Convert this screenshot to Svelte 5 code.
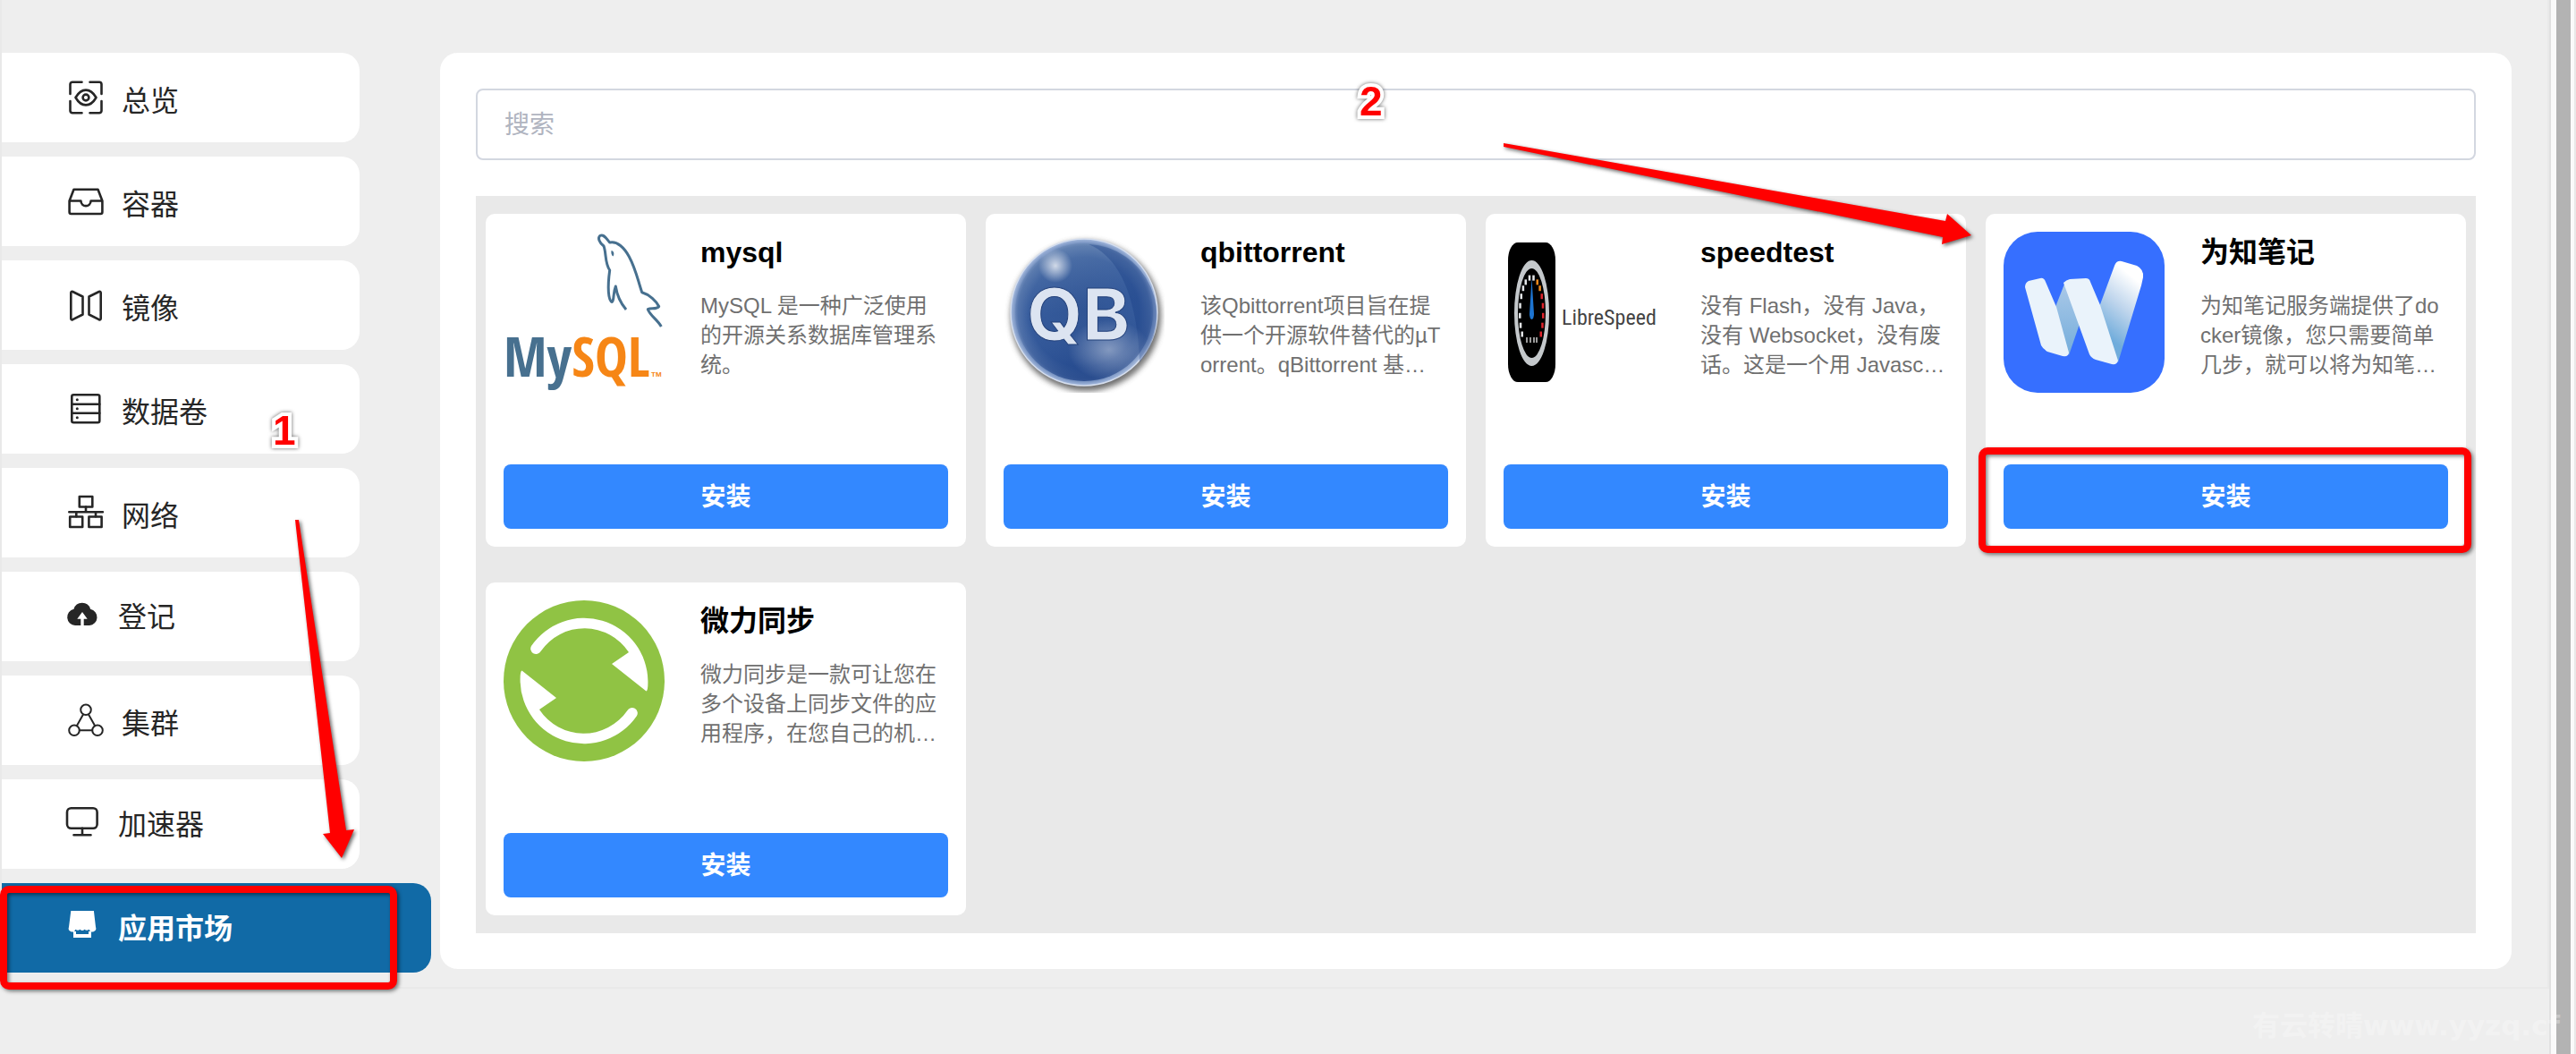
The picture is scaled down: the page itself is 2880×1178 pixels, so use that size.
<script>
	const menus = [
		{ icon: 'overview', label: '总览' },
		{ icon: 'container', label: '容器' },
		{ icon: 'image', label: '镜像' },
		{ icon: 'volume', label: '数据卷' },
		{ icon: 'network', label: '网络' },
		{ icon: 'registry', label: '登记', small: true },
		{ icon: 'cluster', label: '集群' },
		{ icon: 'mirror', label: '加速器', small: true },
		{ icon: 'market', label: '应用市场', small: true }
	];

	const apps = [
		{ logo: 'mysql', name: 'mysql', desc: 'MySQL 是一种广泛使用的开源关系数据库管理系统。' },
		{ logo: 'qb', name: 'qbittorrent', desc: '该Qbittorrent项目旨在提供一个开源软件替代的µTorrent。qBittorrent 基…' },
		{ logo: 'speed', name: 'speedtest', desc: '没有 Flash，没有 Java，没有 Websocket，没有废话。这是一个用 Javasc…' },
		{ logo: 'wiz', name: '为知笔记', desc: '为知笔记服务端提供了docker镜像，您只需要简单几步，就可以将为知笔…', marked: true },
		{ logo: 'weili', name: '微力同步', desc: '微力同步是一款可让您在多个设备上同步文件的应用程序，在您自己的机…' }
	];

	let active = $state('market');
	let keyword = $state('');

	let shown = $derived(apps.filter((a) => a.name.includes(keyword.trim())));

	// 仪表盘刻度
	const ticks = [-126, -110, -94, -78, -62, -46, -30, -10, 10, 30, 46, 62, 78, 94, 110, 126].map((deg, i) => {
		const rad = (deg * Math.PI) / 180;
		return {
			x: 31 + 13 * Math.sin(rad),
			y: 91 - 40 * Math.cos(rad),
			color: i < 9 ? '#e4e6e8' : i < 11 ? '#f08a1c' : '#e0242c'
		};
	});
</script>

<svelte:head>
	<title>应用市场</title>
</svelte:head>

{#snippet menuIcon(name)}
	{#if name === 'overview'}
		<svg class="icon" viewBox="0 0 48 48">
			<path d="M19.500 6.800H9a2.500 2.500 0 0 0-2.500 2.500V20M28.500 6.800H39a2.500 2.500 0 0 1 2.500 2.500V20M19.500 41.200H9a2.500 2.500 0 0 1-2.500-2.500V28M28.500 41.200H39a2.500 2.500 0 0 0 2.500-2.500V28" />
			<path d="M12.500 24C19 12.800 29 12.800 35.500 24C29 35.200 19 35.200 12.500 24Z" />
			<circle cx="24" cy="24" r="3.400" />
		</svg>
	{:else if name === 'container'}
		<svg class="icon" viewBox="0 0 48 48">
			<path d="M5.600 23.500L10.500 10.800h27L42.400 23.500V36a2 2 0 0 1-2 2H7.600a2 2 0 0 1-2-2ZM5.600 23.500h12.800c.6 7.500 10.600 7.500 11.200 0h12.800" />
		</svg>
	{:else if name === 'image'}
		<svg class="icon" viewBox="0 0 48 48">
			<path d="M7.300 10.500c0-1.500.8-2 2-1.500L20.500 14.500V34.500L9.300 40.200c-1.200.5-2 0-2-1.500ZM40.700 10.500c0-1.500-.8-2-2-1.500L27.500 14.500V34.500l11.200 5.700c1.200.5 2 0 2-1.500Z" />
		</svg>
	{:else if name === 'volume'}
		<svg class="icon" viewBox="0 0 48 48">
			<rect x="8.300" y="8.300" width="31" height="31" rx="2" />
			<path d="M8.300 18.700h31M8.300 28.700h31" />
			<g fill="currentColor" stroke="none">
				<circle cx="14.300" cy="13.700" r="1.500" />
				<circle cx="14.300" cy="23.700" r="1.500" />
				<circle cx="14.300" cy="33.700" r="1.500" />
			</g>
		</svg>
	{:else if name === 'network'}
		<svg class="icon" viewBox="0 0 48 48">
			<rect x="16.800" y="6" width="14.500" height="11.500" />
			<rect x="6.200" y="28.500" width="14" height="11.500" />
			<rect x="27.400" y="28.500" width="14.200" height="11.500" />
			<path d="M24 17.500v5.800M5.300 23.300h37.600M13.300 23.300v5M35 23.300v5" />
		</svg>
	{:else if name === 'registry'}
		<svg class="icon" viewBox="0 0 40 40">
			<path
				d="M10.500 14.800a9.700 9.700 0 0 1 18.600 0A9.200 9.200 0 0 1 28 33h-6.300v-7.300h4L20 18l-5.700 7.700h4V33H12A9.200 9.200 0 0 1 10.500 14.800Z"
				fill="currentColor"
				stroke="none"
			/>
		</svg>
	{:else if name === 'cluster'}
		<svg class="icon thin" viewBox="0 0 48 48">
			<circle cx="24" cy="12.300" r="5.800" />
			<circle cx="11" cy="35.300" r="5.800" />
			<circle cx="37" cy="35.300" r="5.800" />
			<path d="M21 17.500L13.800 30.200M27 17.500l7.200 12.700M16.800 35.300h14.400" />
		</svg>
	{:else if name === 'mirror'}
		<svg class="icon" viewBox="0 0 40 40">
			<rect x="3" y="5.200" width="33.600" height="22.600" rx="4.500" />
			<path d="M20 27.800v7.500M10.500 35.300h19" />
		</svg>
	{:else}
		<svg class="icon" viewBox="0 0 40 40">
			<path
				d="M7.300 4h25.600L35 22a4 4 0 0 1-7.500 2.800a4 4 0 0 1-5 0a3.600 3.600 0 0 1-5 0a4 4 0 0 1-5 0A4 4 0 0 1 5 22ZM10 27h3v3h14v-3h3v7H10Z"
				fill="currentColor"
				stroke="none"
			/>
		</svg>
	{/if}
{/snippet}

{#snippet appLogo(name)}
	{#if name === 'mysql'}
		<svg class="logo" viewBox="0 0 180 180">
			<path
				d="M137 87C131 80 127 72 125.300 61C122 69 124 76 121.300 78.500C117 77 116 62 118.700 43C113 35 115 24 112 16C107 12 105 7 107.700 4.500C112 2 115 8 118.700 12C127 10 135 18 140.300 27.700C148 42 150 54 154.700 67.700C163 70 171 78 173.700 83.500C171 87 165 85 161.300 86.700C164 94 172 98 176.300 106"
				fill="none"
				stroke="#47708f"
				stroke-width="3"
				stroke-linejoin="round"
			/>
			<path d="M120.500 21c3 .5 3.500 4 2 6.500c-2-1-2.500-4-2-6.500Z" fill="#47708f" />
			<text class="mysql-word" x="0" y="162" fill="#47708f">My<tspan fill="#f68616">SQL</tspan></text>
			<text class="mysql-tm" x="165" y="162" fill="#f68616">TM</text>
		</svg>
	{:else if name === 'qb'}
		<svg class="logo" viewBox="0 0 180 180">
			<defs>
				<radialGradient id="qb-ball" cx="50%" cy="50%" r="50%">
					<stop offset="0" stop-color="#2a4f90" />
					<stop offset="0.750" stop-color="#30579a" />
					<stop offset="0.900" stop-color="#5475ac" />
					<stop offset="1" stop-color="#a9bde0" />
				</radialGradient>
				<linearGradient id="qb-shade" x1="0.300" y1="0" x2="0.500" y2="1">
					<stop offset="0" stop-color="#6d8bb5" stop-opacity="0.600" />
					<stop offset="0.500" stop-color="#4a6ba5" stop-opacity="0.200" />
					<stop offset="1" stop-color="#163a80" stop-opacity="0.700" />
				</linearGradient>
				<radialGradient id="qb-glow">
					<stop offset="0" stop-color="#fff" stop-opacity="0.750" />
					<stop offset="1" stop-color="#fff" stop-opacity="0" />
				</radialGradient>
				<filter id="qb-blur" x="-20%" y="-20%" width="140%" height="140%">
					<feGaussianBlur stdDeviation="3" />
				</filter>
			</defs>
			<circle cx="92" cy="94" r="84" fill="#555" opacity="0.850" filter="url(#qb-blur)" />
			<circle cx="90" cy="90" r="82" fill="url(#qb-ball)" stroke="#d5deee" stroke-width="1.500" />
			<circle cx="90" cy="90" r="77" fill="url(#qb-shade)" />
			<path d="M95 14C130 28 150 75 152 146A80 80 0 0 0 95 14Z" fill="#173d85" opacity="0.350" />
			<ellipse cx="118" cy="132" rx="46" ry="34" fill="url(#qb-glow)" opacity="0.550" />
			<circle cx="58" cy="38" r="19" fill="url(#qb-glow)" />
			<text class="qb-word" x="26" y="121">QB</text>
		</svg>
	{:else if name === 'speed'}
		<svg class="logo" viewBox="0 0 180 180">
			<rect x="5" y="12" width="53" height="156" rx="11" ry="20" fill="#000" />
			<path
				fill-rule="evenodd"
				d="M12 91a19.500 59 0 1 0 39 0a19.500 59 0 1 0-39 0ZM16 91a15.500 50 0 1 1 31 0a15.500 50 0 1 1-31 0Z"
				fill="#c4c8cb"
			/>
			{#each ticks as t}
				<rect x={t.x - 1} y={t.y - 3} width="2.500" height="6" fill={t.color} />
			{/each}
			<path d="M31.500 52L34 92a2.500 6 0 0 1-5 0Z" fill="#1d74d0" />
			<path d="M26 118v6M30 118v6M34 118v6M37 118v6" stroke="#ccc" stroke-width="1.500" />
			<text class="speed-word" x="65" y="104">LibreSpeed</text>
		</svg>
	{:else if name === 'wiz'}
		<svg class="logo" viewBox="0 0 180 180">
			<defs>
				<linearGradient id="wiz-right" x1="0.600" y1="0.100" x2="0.350" y2="0.800">
					<stop offset="0" stop-color="#fff" />
					<stop offset="0.500" stop-color="#bdd4ec" />
					<stop offset="1" stop-color="#70acdb" />
				</linearGradient>
				<linearGradient id="wiz-fold" x1="0.500" y1="0" x2="0.500" y2="1">
					<stop offset="0" stop-color="#abc9e8" />
					<stop offset="1" stop-color="#74addb" />
				</linearGradient>
			</defs>
			<rect width="180" height="180" rx="38" fill="#366fff" />
			<path d="M107 84L124 38Q126 32 132 33L149 38Q157 42 156 51L154 60L128 146Z" fill="url(#wiz-right)" />
			<path d="M69 56L58 84L73 138L85 103Z" fill="url(#wiz-fold)" />
			<path d="M24 62Q24 57 28 55L41 52Q45 51 47 56L59 84L73 135Q73 140 66 139L49 134Q44 131 42 127Z" fill="#eaf3fb" />
			<path d="M67 57Q70 54 74 53L92 52Q96 52 97 56L108 82L128 144Q127 149 121 148L103 143Q98 141 96 137Z" fill="#eaf3fb" />
		</svg>
	{:else}
		<svg class="logo" viewBox="0 0 180 180">
			<defs>
				<path
					id="sync-arrow"
					d="M31 51A71.400 71.400 0 0 1 161.400 90Q161.600 101 159.500 101.500L121 71L140 58A59.300 59.300 0 0 0 41.500 57A6 6 0 0 1 31 51Z"
				/>
			</defs>
			<circle cx="90" cy="90" r="90" fill="#90c344" />
			<use href="#sync-arrow" fill="#fff" />
			<use href="#sync-arrow" fill="#fff" transform="rotate(180 90 90)" />
		</svg>
	{/if}
{/snippet}

<div class="page">
	<div class="content">
		<div class="frame">
			<nav class="sidebar">
				{#each menus as item}
					<a
						class="menu-item"
						class:small={item.small}
						class:active={active === item.icon}
						href="#{item.icon}"
						onclick={() => (active = item.icon)}
					>
						{@render menuIcon(item.icon)}
						<span>{item.label}</span>
						{#if item.icon === 'market'}
							<i class="mark mark-menu"></i>
						{/if}
					</a>
				{/each}
			</nav>

			<main class="panel">
				<input class="search" type="text" placeholder="搜索" aria-label="搜索" bind:value={keyword} />
				<div class="app-list">
					{#each shown as app}
						<section class="card">
							<div class="card-body">
								{@render appLogo(app.logo)}
								<div class="info">
									<h3>{app.name}</h3>
									<p>{app.desc}</p>
								</div>
							</div>
							<button class="install">安装</button>
							{#if app.marked}
								<i class="mark mark-install"></i>
							{/if}
						</section>
					{/each}
				</div>
			</main>
		</div>
	</div>
	<div class="scrollbar"><div class="thumb"></div></div>

	<!-- 步骤标注 -->
	<span class="step step-one">1</span>
	<span class="step step-two">2</span>
	<svg class="arrow arrow-one" viewBox="0 0 80 390">
		<path d="M10 1h4L67 348L76 347L62 379L41 352L49 351Z" fill="#f00" />
	</svg>
	<svg class="arrow arrow-two" viewBox="0 0 540 130">
		<path d="M1 10L495 97L497 89L524 113L491 123L492 115L1 14Z" fill="#f00" />
	</svg>
	<span class="watermark">有云转晴www.yyzq.cf</span>
</div>

<style>
	:global(body) {
		margin: 0;
		background: #eee;
	}

	.page {
		position: relative;
		display: flex;
		min-height: 100vh;
		overflow: hidden;
		font-family: 'Liberation Sans', 'Noto Sans CJK SC', sans-serif;
	}

	.content {
		flex: 1;
		min-width: 0;
	}

	.frame {
		display: flex;
		align-items: flex-start;
		padding: 59px 40px 16px 0;
		border: 2px solid #e9e9e9;
		border-top: none;
	}

	/* 左侧菜单 */
	.sidebar {
		display: flex;
		flex-direction: column;
		flex: none;
		gap: 16px;
		width: 490px;
	}

	.menu-item {
		position: relative;
		display: flex;
		align-items: center;
		gap: 16px;
		box-sizing: border-box;
		width: 400px;
		height: 100px;
		padding-left: 70px;
		border-radius: 0 20px 20px 0;
		background: #fff;
		color: #262626;
		font-size: 32px;
		line-height: 40px;
		text-decoration: none;
	}

	.menu-item span {
		padding-top: 8px;
	}

	.menu-item.small {
		gap: 20px;
		padding-bottom: 6px;
	}

	.menu-item.active {
		width: 480px;
		background: #116aa6;
		color: #fff;
		font-weight: bold;
	}

	.icon {
		flex: none;
		width: 48px;
		height: 48px;
		fill: none;
		stroke: currentColor;
		stroke-width: 2.6;
		stroke-linecap: round;
		stroke-linejoin: round;
	}

	.icon.thin {
		stroke-width: 2;
	}

	.small .icon {
		width: 40px;
		height: 40px;
	}

	/* 应用列表 */
	.panel {
		flex: 1;
		min-width: 0;
		padding: 40px;
		border-radius: 20px;
		background: #fff;
	}

	.search {
		display: block;
		box-sizing: border-box;
		width: 100%;
		height: 80px;
		margin-bottom: 40px;
		padding: 2px 30px 0;
		border: 2px solid #d3d7e0;
		border-radius: 8px;
		outline: none;
		background: #fff;
		color: #606266;
		font-family: inherit;
		font-size: 28px;
	}

	.search::placeholder {
		color: #b0b4c0;
		opacity: 1;
	}

	.app-list {
		display: grid;
		grid-template-columns: repeat(4, minmax(0, 1fr));
		gap: 40px 22px;
		padding: 20px 11px;
		background: #e9e9e9;
	}

	.card {
		position: relative;
		display: flex;
		flex-direction: column;
		justify-content: space-between;
		box-sizing: border-box;
		min-height: 372px;
		padding: 20px;
		border-radius: 10px;
		background: #fff;
	}

	.card-body {
		display: flex;
		gap: 40px;
	}

	.logo {
		flex: none;
		width: 180px;
		height: 180px;
	}

	.info {
		flex: 1;
		min-width: 0;
	}

	h3 {
		margin: 0 0 20px;
		color: #000;
		font-size: 32px;
		line-height: 46px;
	}

	p {
		margin: 0;
		color: #707070;
		font-size: 24px;
		line-height: 33px;
		word-break: break-all;
	}

	.install {
		height: 72px;
		padding: 0 0 4px;
		border: none;
		border-radius: 8px;
		background: #3388ff;
		color: #fff;
		font-family: inherit;
		font-size: 28px;
		font-weight: bold;
		cursor: pointer;
	}

	.mysql-word {
		font: bold 62px 'Open Sans Condensed', 'Roboto Condensed', 'Liberation Sans Narrow', sans-serif;
	}

	.mysql-tm {
		font: bold 8px 'Liberation Sans', sans-serif;
	}

	.qb-word {
		fill: #dce4f1;
		stroke: #24427c;
		stroke-width: 1;
		font: bold 80px Inter, sans-serif;
	}

	.speed-word {
		fill: #444;
		font: 24px 'Roboto Condensed', 'Liberation Sans Narrow', 'Open Sans', sans-serif;
	}

	/* 右侧滚动条 */
	.scrollbar {
		display: flex;
		flex: none;
		padding: 0 4px 0 6px;
		border-left: 2px solid #e1e1e1;
		border-right: 2px solid #e8e8e8;
		background: #fafafa;
	}

	.thumb {
		width: 16px;
		background: #b3b3b3;
	}

	/* 标注 */
	.mark {
		position: absolute;
		border: 8px solid #f00;
		border-radius: 10px;
		filter: drop-shadow(2px 2px 2px rgba(0, 0, 0, 0.5));
		pointer-events: none;
	}

	.mark-menu {
		inset: 3px 38px -19px -2px;
	}

	.mark-install {
		inset: 261px -6px -7px -8px;
	}

	.step {
		position: absolute;
		color: #f00;
		font-size: 46px;
		font-weight: bold;
		line-height: 48px;
		-webkit-text-stroke: 8px #fff;
		paint-order: stroke fill;
		filter: drop-shadow(0 0 2px rgba(0, 0, 0, 0.6));
	}

	.step-one {
		top: 457px;
		left: 305px;
	}

	.step-two {
		top: 89px;
		left: 1520px;
	}

	.arrow {
		position: absolute;
		overflow: visible;
		filter: drop-shadow(2px 2px 2px rgba(0, 0, 0, 0.6));
		pointer-events: none;
	}

	.arrow-one {
		top: 580px;
		left: 320px;
		width: 80px;
		height: 390px;
	}

	.arrow-two {
		top: 150px;
		left: 1680px;
		width: 540px;
		height: 130px;
	}

	.watermark {
		position: absolute;
		right: 18px;
		bottom: 12px;
		color: rgba(255, 255, 255, 0.3);
		font-family: 'DejaVu Sans', 'Noto Sans CJK SC', sans-serif;
		font-size: 31px;
		font-weight: bold;
		line-height: 40px;
		white-space: nowrap;
	}
</style>
